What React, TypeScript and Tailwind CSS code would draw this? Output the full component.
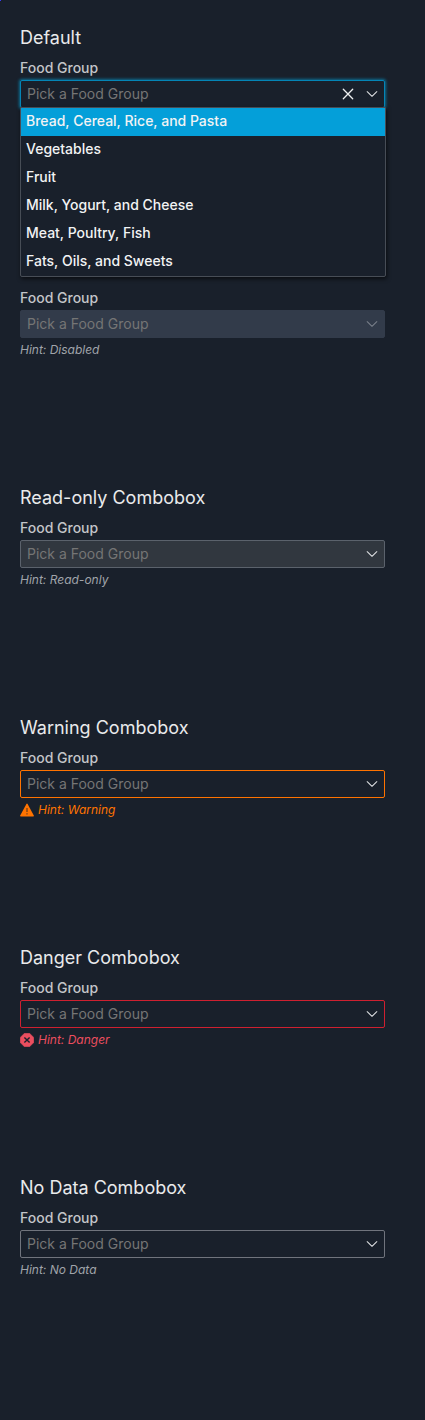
import { useId } from "react";
import type { ReactNode } from "react";
import { clsx } from "clsx";

type Tone = "focused" | "disabled" | "readonly" | "warning" | "danger" | "normal";

const boxTone: Record<Tone, string> = {
  focused: "border-[#0485b6] shadow-[0_0_3px_1px_#0d6f94]",
  disabled: "border-[#323b4a] bg-[#323b4a]",
  readonly: "border-[#5b626c] bg-[#31373f]",
  warning: "border-[#ff7300]",
  danger: "border-[#cf2030]",
  normal: "border-[#70747d]",
};

const hintTone: Record<Tone, string> = {
  focused: "text-[#a0a4aa]",
  disabled: "text-[#a0a4aa]",
  readonly: "text-[#a0a4aa]",
  warning: "text-[#ff7300]",
  danger: "text-[#eb4e5f]",
  normal: "text-[#a0a4aa]",
};

const foods = [
  "Bread, Cereal, Rice, and Pasta",
  "Vegetables",
  "Fruit",
  "Milk, Yogurt, and Cheese",
  "Meat, Poultry, Fish",
  "Fats, Oils, and Sweets",
];

function Chevron() {
  return (
    <svg viewBox="0 0 12 12" className="size-3" fill="none" stroke="currentColor" strokeWidth="1.05" strokeLinecap="round" strokeLinejoin="round">
      <path d="M1.2 3.7 6 8.3l4.8-4.6" />
    </svg>
  );
}

function Cross() {
  return (
    <svg viewBox="0 0 12 12" className="size-3" fill="none" stroke="currentColor" strokeWidth="1.3" strokeLinecap="round">
      <path d="m1.3 1.3 9.4 9.4M10.7 1.3l-9.4 9.4" />
    </svg>
  );
}

function WarningIcon() {
  return (
    <svg viewBox="0 0 14 14" className="size-3.5">
      <path d="M6.4.9a.7.7 0 0 1 1.2 0l6.2 11.5a.7.7 0 0 1-.6 1H.8a.7.7 0 0 1-.6-1Z" fill="#ff7300" />
      <path d="M7 5v4" stroke="#7d4318" strokeWidth="1.4" />
      <path d="M7 10.2v1.4" stroke="#7d4318" strokeWidth="1.4" />
    </svg>
  );
}

function DangerIcon() {
  return (
    <svg viewBox="0 0 14 14" className="size-3.5">
      <path d="M4.4.2h5.2l4.2 4.2v5.2l-4.2 4.2H4.4L.2 9.6V4.4Z" fill="#eb4e5f" stroke="#eb4e5f" strokeWidth=".4" strokeLinejoin="round" />
      <path d="m4.4 4.4 5.2 5.2M9.6 4.4 4.4 9.6" stroke="#19202b" strokeWidth="1.4" />
    </svg>
  );
}

type ComboboxProps = {
  title?: string;
  tone: Tone;
  hint?: string;
  icon?: ReactNode;
  open?: boolean;
};

function Combobox({ title, tone, hint, icon, open = false }: ComboboxProps) {
  const id = useId();
  const disabled = tone === "disabled";
  return (
    <section className={clsx("flex min-h-[230px] flex-col", title ? "pt-6" : "pt-[52px]")}>
      {title && <h2 className="text-lg leading-7 text-[#e9eaeb]">{title}</h2>}
      <label htmlFor={id} className="mt-1.5 text-sm leading-5 font-medium text-[#c3c5c8]">
        Food Group
      </label>
      <div className={clsx("relative mt-0.5 flex h-7 items-center rounded-xs border", boxTone[tone])}>
        <input
          id={id}
          type="text"
          role="combobox"
          aria-expanded={open}
          aria-controls={`${id}-list`}
          placeholder="Pick a Food Group"
          disabled={disabled}
          readOnly={tone === "readonly"}
          className="h-full min-w-0 flex-1 bg-transparent pb-0.5 pl-1.5 text-sm text-[#e9eaeb] outline-none placeholder:text-[#757575]"
        />
        {open && (
          <button type="button" aria-label="Clear" className="flex h-full w-6 items-center justify-center text-[#eef0f1]">
            <Cross />
          </button>
        )}
        <button
          type="button"
          aria-label="Show options"
          disabled={disabled}
          className={clsx("flex h-full w-6 items-center justify-center", disabled ? "text-[#7b818b]" : "text-[#e3e5e7]")}
        >
          <Chevron />
        </button>
        {open && (
          <ul
            id={`${id}-list`}
            role="listbox"
            className="absolute top-full -right-0.5 -left-px rounded-b-xs border border-[#474d56] bg-[#19202b] shadow-[1px_2px_4px_rgba(0,0,0,0.6)]"
          >
            {foods.map((food, i) => (
              <li
                key={food}
                role="option"
                aria-selected={i === 0}
                className={clsx("h-7 pl-[5px] text-sm leading-[26px] font-medium text-[#f2f3f4]", i === 0 && "bg-[#049fd9]")}
              >
                {food}
              </li>
            ))}
          </ul>
        )}
      </div>
      {hint && (
        <p className={clsx("mt-1 flex items-center gap-1 text-xs leading-4 italic", hintTone[tone])}>
          {icon}
          {hint}
        </p>
      )}
    </section>
  );
}

export default function App() {
  return (
    <main className="relative min-h-screen bg-[#19202b] pr-10 pb-10 pl-5 font-['Inter','Liberation_Sans',sans-serif]">
      <span className="absolute top-0 left-0 size-px bg-[#3a3aff]" />
      <Combobox title="Default" tone="focused" open />
      <Combobox tone="disabled" hint="Hint: Disabled" />
      <Combobox title="Read-only Combobox" tone="readonly" hint="Hint: Read-only" />
      <Combobox title="Warning Combobox" tone="warning" hint="Hint: Warning" icon={<WarningIcon />} />
      <Combobox title="Danger Combobox" tone="danger" hint="Hint: Danger" icon={<DangerIcon />} />
      <Combobox title="No Data Combobox" tone="normal" hint="Hint: No Data" />
    </main>
  );
}
